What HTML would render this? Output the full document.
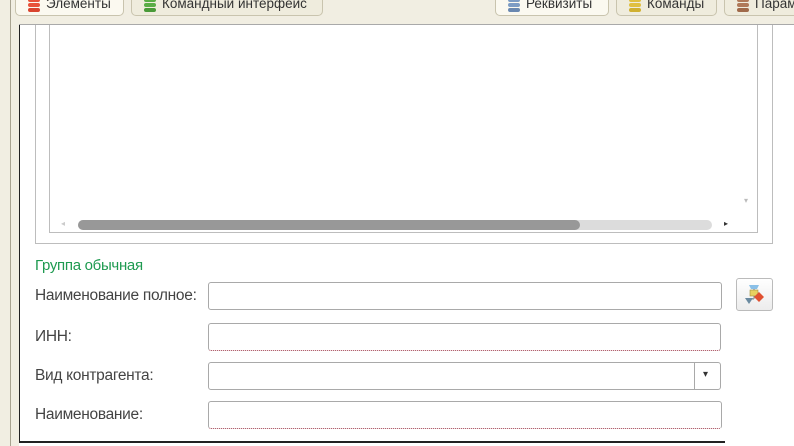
<!DOCTYPE html>
<html><head><meta charset="utf-8"><style>
*{margin:0;padding:0;box-sizing:border-box}
body{width:794px;height:446px;overflow:hidden;background:#fff;font-family:"Liberation Sans",sans-serif;position:relative}
.a{position:absolute}
.tab{position:absolute;top:-6px;height:22px;border:1px solid #c9c4ae;border-top:none;border-radius:0 0 5px 5px;background:#efecdd;font-size:13.5px;color:#333;padding:2px 0 0 30px;white-space:nowrap}
.tab.sel{background:#fbf9f0}
.ic{position:absolute;left:12px;top:4px;width:12px;height:14px}
.ic i{display:block;height:4px;margin-bottom:1px;border-radius:2px}
.lbl{position:absolute;left:35px;font-size:15.5px;color:#444;letter-spacing:-0.3px}
.fld{position:absolute;left:208px;width:514px;height:28px;border:1px solid #a9a9a9;border-radius:3px;background:#fff}
.dot{border-bottom:1px dotted #a04050}
</style></head><body>
<div class="a" style="left:0;top:0;width:794px;height:24px;background:#f1eee2"></div>
<div class="a" style="left:0;top:0;width:19px;height:446px;background:#f1eee2"></div>
<div class="a" style="left:10px;top:0;width:1px;height:446px;background:#a8a390"></div>
<div class="a" style="left:19px;top:24px;width:775px;height:1px;background:#a9a9a9"></div>
<div class="tab sel" style="left:15px;width:109px"><div class="ic"><i style="background:#e8523a"></i><i style="background:#e8523a"></i><i style="background:#d9442e"></i></div>Элементы</div>
<div class="tab" style="left:131px;width:192px"><div class="ic"><i style="background:#5aad46"></i><i style="background:#5aad46"></i><i style="background:#4a9a38"></i></div>Командный интерфейс</div>
<div class="tab sel" style="left:495px;width:114px"><div class="ic"><i style="background:#7d9cc4"></i><i style="background:#7d9cc4"></i><i style="background:#6a88b0"></i></div>Реквизиты</div>
<div class="tab" style="left:616px;width:101px"><div class="ic"><i style="background:#e0c040"></i><i style="background:#e0c040"></i><i style="background:#d0b030"></i></div>Команды</div>
<div class="tab" style="left:724px;width:90px"><div class="ic"><i style="background:#b07a5a"></i><i style="background:#b07a5a"></i><i style="background:#a06a4a"></i></div>Парам</div>
<div class="a" style="left:19px;top:25px;width:1px;height:418px;background:#222"></div>
<div class="a" style="left:19px;top:441px;width:706px;height:2px;background:#222"></div>
<div class="a" style="left:35px;top:25px;width:738px;height:219px;border:1px solid #bdbdbd;border-top:none"></div>
<div class="a" style="left:49px;top:25px;width:709px;height:208px;border:1px solid #bdbdbd;border-top:none"></div>
<div class="a" style="left:78px;top:220px;width:634px;height:10px;border-radius:5px;background:#dcdcdc"></div>
<div class="a" style="left:78px;top:220px;width:502px;height:10px;border-radius:5px;background:#989898"></div>
<div class="a" style="left:61px;top:219px;font-size:8px;color:#ccc">◂</div>
<div class="a" style="left:724px;top:219px;font-size:8px;color:#333">▸</div>
<div class="a" style="left:744px;top:196px;font-size:8px;color:#bbb">▾</div>
<div class="a" style="left:35px;top:257px;font-size:15px;color:#1e9a50;letter-spacing:-0.3px">Группа обычная</div>
<div class="lbl" style="top:287px">Наименование полное:</div>
<div class="fld" style="top:282px"></div>
<div class="a" style="left:736px;top:278px;width:37px;height:33px;border:1px solid #bbb;border-radius:3px;background:linear-gradient(#fff,#ececec)">
<svg width="35" height="31" viewBox="0 0 35 31"><path d="M12 6h10l-2 4h-6z" fill="#8ac0e8"/><rect x="13" y="11" width="8" height="6" fill="#e8d060" stroke="#a09040" stroke-width=".6"/><path d="M17 10v1M17 17v3M11 20h6" stroke="#666" stroke-width=".8"/><path d="M8 19h8l-4 6z" fill="#6a8aa0"/><path d="M22 13l5 5-5 5-5-5z" fill="#e05030"/></svg></div>
<div class="lbl" style="top:328px">ИНН:</div>
<div class="fld dot" style="top:323px;width:513px"></div>
<div class="lbl" style="top:367px">Вид контрагента:</div>
<div class="fld" style="top:362px;width:513px"></div>
<div class="a" style="left:694px;top:362px;width:1px;height:28px;background:#a9a9a9"></div>
<div class="a" style="left:703px;top:369px;font-size:10px;color:#333">▾</div>
<div class="lbl" style="top:406px">Наименование:</div>
<div class="fld dot" style="top:401px"></div>
</body></html>
